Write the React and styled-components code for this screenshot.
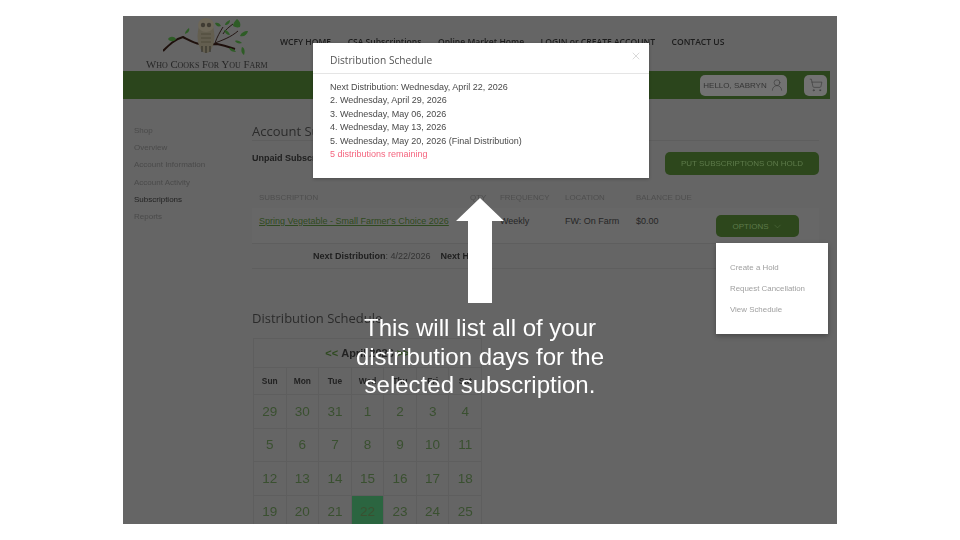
import React from 'react';
import styled, { createGlobalStyle } from 'styled-components';
import { ChevronDown, ShoppingCart, UserRound, X } from 'lucide-react';

const Global = createGlobalStyle`
  html, body { margin: 0; padding: 0; background: #fff; }
  #root { width: 960px; height: 540px; overflow: hidden; }
`;
const Stage = styled.div`
  width: 960px; height: 540px; box-sizing: border-box; padding: 16px 123px; background: #fff;
  font-family: "Liberation Sans", Arial, sans-serif;
`;
const Shell = styled.div`
  position: relative; width: 714px; height: 508px; overflow: hidden; background: #656565;
`;
const Page = styled.div`
  width: 714px; height: 508px; filter: blur(0.4px);
`;
const Header = styled.header`
  height: 55px; display: flex; align-items: flex-start;
`;
const Brand = styled.div`
  width: 134px; padding-left: 23px; display: flex; flex-direction: column; align-items: flex-start;
`;
const Logo = styled.svg`
  width: 85px; height: 40px; margin-left: 17px; margin-top: 1px; display: block; flex: none;
`;
const FarmName = styled.div`
  font-family: "Liberation Serif", serif; font-variant: small-caps; font-size: 10.75px; line-height: 11px; color: #262626; white-space: nowrap; margin-top: 2px;
`;
const Nav = styled.nav`
  display: flex; gap: 16.5px; padding-top: 20px;
  font-family: "Open Sans", sans-serif; font-weight: 600; font-size: 8.55px; line-height: 12px; color: #1c1c1c; white-space: nowrap;
`;
const GreenBar = styled.div`
  width: 707px; height: 28px; background: #2b451c; display: flex; align-items: center; justify-content: flex-end; gap: 17px; padding-right: 3px; box-sizing: border-box;
`;
const Hello = styled.div`
  width: 87px; height: 21px; box-sizing: border-box; background: #727272; border-radius: 5px; display: flex; align-items: center; justify-content: center; gap: 3px; font-size: 8px; color: #353535; white-space: nowrap;
`;
const Cart = styled.div`
  width: 23px; height: 21px; background: #727272; border-radius: 5px; display: flex; align-items: center; justify-content: center; color: #353535;
`;
const Body = styled.div`
  display: flex; padding-left: 11px;
`;
const Side = styled.aside`
  width: 118px; padding-top: 22.5px; display: flex; flex-direction: column;
`;
const SideItem = styled.div`
  height: 17.4px; line-height: 17.4px; font-size: 8px; white-space: nowrap; color: ${p => (p.$active ? '#222' : '#4a4a4a')};
`;
const Main = styled.main`
  width: 567px; padding-top: 20px;
`;
const Title = styled.h2`
  margin: 0; font-family: "Open Sans", sans-serif; font-weight: 400; font-size: 13px; line-height: 20px; color: #2b2b2b;
`;
const TopTitle = styled(Title)`
  height: 21px; line-height: 24px; border-bottom: 1px solid #5e5e5e;
`;
const ActionRow = styled.div`
  display: flex; justify-content: space-between; align-items: flex-start; padding-top: 11px;
`;
const Strong = styled.b`
  font-size: 9px; line-height: 13px; color: #1e1e1e;
`;
const GreenButton = styled.div`
  background: #2d471c; border-radius: 5px; color: #5d7a4a; font-size: 8px; display: flex; align-items: center; justify-content: center; gap: 3px; white-space: nowrap;
  width: ${p => p.$w}px; height: ${p => p.$h}px;
`;
const Grid = styled.div`
  display: grid; grid-template-columns: 211px 30px 65px 71px 1fr; padding-left: 7px; align-items: center;
`;
const TableHead = styled(Grid)`
  height: 22px; margin-top: 11px; font-size: 7.9px; color: #4e4e4e; white-space: nowrap;
`;
const TableRow = styled(Grid)`
  height: 36px; background: #676767; border-bottom: 1px solid #5e5e5e; box-sizing: border-box; font-size: 9px; line-height: 11px; color: #262626; position: relative; white-space: nowrap; align-items: start; padding-top: 8px;
`;
const SubLink = styled.span`
  color: #2f4a20; text-decoration: underline; font-size: 9px;
`;
const OptionsSlot = styled.div`
  position: absolute; left: 464px; top: 7px;
`;
const NextLine = styled.div`
  height: 25px; padding-left: 61px; display: flex; align-items: center; gap: 10px; border-bottom: 1px solid #5e5e5e; box-sizing: border-box; font-size: 9px; color: #333; white-space: nowrap;
  b { color: #1e1e1e; }
`;
const ScheduleTitle = styled(Title)`
  margin-top: 39px;
`;
const Calendar = styled.div`
  width: 229px; margin: 10px 0 0 1px; display: grid; grid-template-columns: repeat(7, 1fr); gap: 1px; background: #5e5e5e; border: 1px solid #5e5e5e; box-sizing: border-box;
`;
const CalTitle = styled.div`
  grid-column: 1 / -1; height: 28px; background: #656565; display: flex; align-items: center; justify-content: center; gap: 3px; font-size: 11px; font-weight: 700; color: #222;
  span { color: #2f4a20; }
`;
const Dow = styled.div`
  height: 26px; background: #656565; display: flex; align-items: center; justify-content: center; font-size: 8.4px; font-weight: 700; color: #222;
`;
const Day = styled.div`
  height: 32.5px; display: flex; align-items: center; justify-content: center; font-size: 13.5px; color: #3a5030;
  background: ${p => (p.$on ? '#2b6540' : '#656565')};
`;
const Modal = styled.section`
  position: absolute; left: 190px; top: 27px; width: 336px; height: 135px; background: #fff; box-shadow: 0 1px 3px rgba(0,0,0,.25);
`;
const ModalHead = styled.div`
  height: 31px; box-sizing: border-box; border-bottom: 1px solid #e5e5e5; padding: 10px 17px 0; display: flex; justify-content: space-between; font-family: "Open Sans", sans-serif; font-size: 10.2px; line-height: 14px; color: #555;
`;
const Close = styled.span`
  color: #b5b5b5; margin: -3px -10px 0 0; height: 12px;
`;
const ModalBody = styled.div`
  padding: 7px 17px 0; font-size: 9px; line-height: 13.4px; color: #4a4a4a; filter: blur(0.25px);
`;
const Remaining = styled.div`
  color: #f4657f;
`;
const Arrow = styled.svg`
  position: absolute; left: 333px; top: 182px; width: 48px; height: 105px;
`;
const Caption = styled.div`
  position: absolute; left: 207px; top: 298px; width: 300px; text-align: center; font-size: 24px; line-height: 28.5px; color: #fff;
`;
const Menu = styled.div`
  position: absolute; left: 593px; top: 227px; width: 112px; height: 91px; box-sizing: border-box; padding: 14px 14px; background: #fff; box-shadow: 0 2px 5px rgba(0,0,0,.3); display: flex; flex-direction: column;
`;
const MenuItem = styled.div`
  height: 21px; line-height: 21px; font-size: 7.9px; color: #a0a0a0; white-space: nowrap;
`;

const nav = ['WCFY HOME', 'CSA Subscriptions', 'Online Market Home', 'LOGIN or CREATE ACCOUNT', 'CONTACT US'];
const side = ['Shop', 'Overview', 'Account Information', 'Account Activity', 'Subscriptions', 'Reports'];
const dows = ['Sun', 'Mon', 'Tue', 'Wed', 'Thu', 'Fri', 'Sat'];
const days = [29, 30, 31, 1, 2, 3, 4, 5, 6, 7, 8, 9, 10, 11, 12, 13, 14, 15, 16, 17, 18, 19, 20, 21, 22, 23, 24, 25];
const dates = ['Next Distribution: Wednesday, April 22, 2026', '2. Wednesday, April 29, 2026', '3. Wednesday, May 06, 2026', '4. Wednesday, May 13, 2026', '5. Wednesday, May 20, 2026 (Final Distribution)'];

const OwlLogo = () => (
  <Logo viewBox="0 0 85 40">
    <path d="M0 34 C6 28 12 22 20 20 C26 23 31 26 37 27 C43 28 48 27 54 27 C60 28 66 30 72 32" fill="none" stroke="#1e100c" strokeWidth="2" />
    <path d="M52 26 C54 20 57 15 60 10 M52 26 C60 23 68 20 75 14 M60 17 C62 13 66 10 70 7" fill="none" stroke="#1e100c" strokeWidth="0.9" />
    <ellipse cx="43" cy="19" rx="8.5" ry="17" fill="#635e4f" />
    <ellipse cx="43" cy="8" rx="8" ry="7" fill="#6d6758" />
    <circle cx="40" cy="8" r="2.2" fill="#403c33" /><circle cx="46" cy="8" r="2.2" fill="#403c33" />
    <path d="M38 17h10M38 21h10M38 25h10" stroke="#4c4738" strokeWidth="0.9" />
    <path d="M39 29v6M43 29v7M47 29v6" stroke="#2c2a24" strokeWidth="1" />
    <g fill="#2e5c26">
      <path d="M5 22c2-3 6-3 8 0-2 3-6 3-8 0z" /><path d="M22 17c0-3 2-4 4-6 1 3-1 5-4 6z" />
      <path d="M52 6c2-1 5 0 6 3-3 1-5 0-6-3z" /><path d="M62 8c0-2 2-4 5-5 0 3-2 5-5 5z" /><path d="M70 9c0-3 2-5 4-7 3 2 4 5 3 8-3 1-5 0-7-1z" />
      <path d="M61 13c3 0 5 2 6 5-3 0-5-2-6-5z" /><path d="M77 19c1-3 4-5 8-5-1 4-4 6-8 5z" /><path d="M72 24c2-1 5 0 7 2-3 1-6 0-7-2z" /><path d="M66 31c3 0 6 2 7 4-3 0-6-1-7-4z" /><path d="M79 30c3 1 3 5 2 8-3-2-3-5-2-8z" />
    </g>
  </Logo>
);

export default function App() {
  return (
    <Stage>
      <Global />
      <Shell>
        <Page>
          <Header>
            <Brand>
              <OwlLogo />
              <FarmName>Who Cooks For You Farm</FarmName>
            </Brand>
            <Nav>{nav.map(n => <span key={n}>{n}</span>)}</Nav>
          </Header>
          <GreenBar>
            <Hello>HELLO, SABRYN <UserRound size={14} strokeWidth={1} /></Hello>
            <Cart><ShoppingCart size={14} strokeWidth={1} /></Cart>
          </GreenBar>
          <Body>
            <Side>{side.map(s => <SideItem key={s} $active={s === 'Subscriptions'}>{s}</SideItem>)}</Side>
            <Main>
              <TopTitle>Account Subscriptions</TopTitle>
              <ActionRow>
                <Strong>Unpaid Subscriptions</Strong>
                <GreenButton $w={154} $h={23}>PUT SUBSCRIPTIONS ON HOLD</GreenButton>
              </ActionRow>
              <TableHead>
                <span>SUBSCRIPTION</span><span>QTY</span><span>FREQUENCY</span><span>LOCATION</span><span>BALANCE DUE</span>
              </TableHead>
              <TableRow>
                <SubLink>Spring Vegetable - Small Farmer's Choice 2026</SubLink><span>1</span><span>Weekly</span><span>FW: On Farm</span><span>$0.00</span>
                <OptionsSlot><GreenButton $w={83} $h={22}>OPTIONS <ChevronDown size={11} strokeWidth={1} /></GreenButton></OptionsSlot>
              </TableRow>
              <NextLine><span><b>Next Distribution</b>: 4/22/2026</span><b>Next Hold</b></NextLine>
              <ScheduleTitle>Distribution Schedule</ScheduleTitle>
              <Calendar>
                <CalTitle><span>&lt;&lt;</span> April 2026 <span>&gt;&gt;</span></CalTitle>
                {dows.map(d => <Dow key={d}>{d}</Dow>)}
                {days.map(d => <Day key={d} $on={d === 22}>{d}</Day>)}
              </Calendar>
            </Main>
          </Body>
        </Page>
        <Modal>
          <ModalHead>Distribution Schedule<Close><X size={12} strokeWidth={1} /></Close></ModalHead>
          <ModalBody>
            {dates.map(d => <div key={d}>{d}</div>)}
            <Remaining>5 distributions remaining</Remaining>
          </ModalBody>
        </Modal>
        <Arrow viewBox="0 0 48 105"><path d="M24 0 48 23H36V105H12V23H0Z" fill="#fff" /></Arrow>
        <Caption>This will list all of your distribution days for the selected subscription.</Caption>
        <Menu>
          <MenuItem>Create a Hold</MenuItem>
          <MenuItem>Request Cancellation</MenuItem>
          <MenuItem>View Schedule</MenuItem>
        </Menu>
      </Shell>
    </Stage>
  );
}
